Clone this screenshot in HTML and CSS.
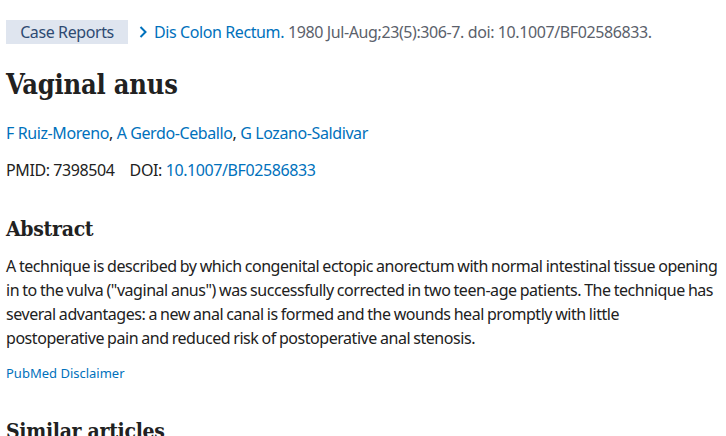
FILE: index.html
```html
<!DOCTYPE html>
<html lang="en">
<head>
<meta charset="utf-8">
<title>Vaginal anus - PubMed</title>
<link rel="stylesheet" href="styles.css">
</head>
<body>
<main class="article">
  <div class="crumbs">
    <span class="badge">Case Reports</span>
    <span class="cite">
      <svg class="chev" width="10" height="14" viewBox="0 0 10 14"><path d="M2.5 2 L7.5 7 L2.5 12" fill="none" stroke="#0071bc" stroke-width="2"/></svg>
      <a class="link" href="#">Dis Colon Rectum.</a>
      <span class="meta">1980 Jul-Aug;23(5):306-7. doi: 10.1007/BF02586833.</span>
    </span>
  </div>
  <h1 class="title">Vaginal anus</h1>
  <div class="authors"><a class="link" href="#">F Ruiz-Moreno</a>, <a class="link" href="#">A Gerdo-Ceballo</a>, <a class="link" href="#">G Lozano-Saldivar</a></div>
  <div class="ids"><span>PMID: 7398504</span><span>DOI: <a class="link" href="#">10.1007/BF02586833</a></span></div>
  <h2 class="section-title">Abstract</h2>
  <p class="abstract">A technique is described by which congenital ectopic anorectum with normal intestinal tissue opening in to the vulva ("vaginal anus") was successfully corrected in two teen-age patients. The technique has several advantages: a new anal canal is formed and the wounds heal promptly with little postoperative pain and reduced risk of postoperative anal stenosis.</p>
  <a class="disclaimer" href="#">PubMed Disclaimer</a>
  <h2 class="section-title similar">Similar articles</h2>
</main>
</body>
</html>
```
FILE: styles.css
```css
html, body {
  margin: 0;
  padding: 0;
  background: #fff;
}
body {
  font-family: "Segoe UI", "Noto Sans", "Open Sans", sans-serif;
  color: #212121;
  font-size: 16px;
  letter-spacing: -0.4px;
}
.article {
  padding: 20px 0 0 6px;
  width: 720px;
}
a { text-decoration: none; }
.link { color: #0071bc; }
.crumbs {
  display: flex;
  align-items: center;
  height: 24px;
  white-space: nowrap;
}
.badge {
  display: inline-flex;
  align-items: center;
  justify-content: center;
  width: 122px;
  height: 24px;
  background: #dfe5ef;
  color: #2e4a72;
  font-size: 16px;
}
.cite {
  display: inline-flex;
  align-items: center;
  margin-left: 10px;
  gap: 4px;
}
.chev { margin-right: 2px; }
.meta { color: #5b616b; }
.title {
  font-family: "DejaVu Serif Condensed", "DejaVu Serif", "Liberation Serif", serif;
  font-stretch: condensed;
  font-weight: bold;
  font-size: 27px;
  line-height: 36px;
  letter-spacing: -0.2px;
  margin: 23px 0 0 0;
  color: #212121;
}
.authors {
  margin-top: 18px;
  line-height: 24px;
}
.ids {
  margin-top: 13px;
  line-height: 24px;
  display: flex;
  gap: 15px;
}
.section-title {
  font-family: "DejaVu Serif Condensed", "DejaVu Serif", "Liberation Serif", serif;
  font-stretch: condensed;
  font-weight: bold;
  font-size: 21px;
  line-height: 28px;
  letter-spacing: -0.3px;
  margin: 33px 0 0 0;
}
.abstract {
  margin: 11px 0 0 0;
  line-height: 24px;
  letter-spacing: -0.45px;
  word-spacing: -0.6px;
  width: 712.5px;
}
.disclaimer {
  display: block;
  color: #0071bc;
  font-size: 13px;
  letter-spacing: 0;
  line-height: 20px;
  margin-top: 13px;
}
.similar { margin-top: 34px; }
```
